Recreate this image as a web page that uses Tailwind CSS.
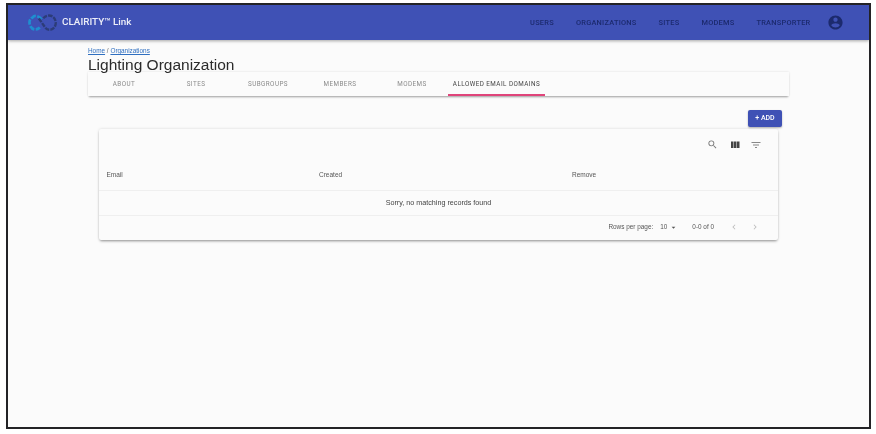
<!DOCTYPE html>
<html lang="en">
<head>
    <meta charset="UTF-8">
    <title>CLAIRITY Link</title>
    <script src="https://cdn.jsdelivr.net/npm/@tailwindcss/browser@4"></script>
</head>
<body class="bg-white font-['Liberation_Sans',Arial,sans-serif]">
    <div class="w-[876px] h-[434px] pt-[3px] pl-[6px] pr-[5px] pb-[5px] overflow-hidden">
        <div class="h-full border-2 border-[#232326] bg-[#fbfbfb] overflow-hidden">
            <div class="blur-[0.4px]">
            <!-- top bar -->
            <header class="h-[35px] bg-[#3f51b5] shadow-[0_1px_3px_rgba(0,0,0,0.35)] flex items-center pl-[20px] pr-[25.5px]">
                <svg class="w-[29px] h-[20px] mr-[5px]" viewBox="0 0 32 22" fill="none">
                    <path d="M15 7 C12 3 7 2 5 5 C1 6 1 12 3 15 C5 19 10 19 13 16" stroke="#1f8fd0" stroke-width="3" stroke-dasharray="6 1.5"/>
                    <path d="M12 6 L19 16 C22 20 28 19 30 14 C32 9 29 4 25 3 C21 2 18 4 16 7" stroke="#2c3c78" stroke-width="2.6" stroke-dasharray="5 1.2"/>
                </svg>
                <span class="font-['Roboto',sans-serif] text-white/90 text-[9.9px] font-medium">CLAIRITY™ Link</span>
                <nav class="ml-auto flex items-center font-['Roboto',sans-serif] text-[7.4px] tracking-[0.25px] text-[#1c2a6e] font-medium">
                    <span class="mr-[22px]">USERS</span>
                    <span class="mr-[22px]">ORGANIZATIONS</span>
                    <span class="mr-[22px]">SITES</span>
                    <span class="mr-[22px]">MODEMS</span>
                    <span class="mr-[16px]">TRANSPORTER</span>
                    <svg class="w-[17px] h-[17px]" viewBox="0 0 24 24" fill="#1c2a6e">
                        <path d="M12 2C6.48 2 2 6.48 2 12s4.48 10 10 10 10-4.48 10-10S17.52 2 12 2zm0 3c1.66 0 3 1.34 3 3s-1.34 3-3 3-3-1.34-3-3 1.34-3 3-3zm0 14.2c-2.5 0-4.71-1.28-6-3.22.03-1.99 4-3.08 6-3.08 1.99 0 5.97 1.09 6 3.08-1.29 1.94-3.5 3.22-6 3.22z"/>
                    </svg>
                </nav>
            </header>

            <main class="pt-[7px]">
                <div class="ml-[80px] mr-[80px]">
                    <div class="text-[6.4px] leading-[8px] text-[#2f6fc0]"><span class="underline">Home</span> <span class="text-[#666]">/</span> <span class="underline">Organizations</span></div>
                    <h1 class="relative z-10 text-[15.5px] leading-[17px] text-[#2b2b2b] mt-[1px]">Lighting Organization</h1>
                    <!-- tabs -->
                    <div class="h-[24px] -mt-[1px] bg-[#fbfbfb] shadow-[0_2px_2px_-1px_rgba(0,0,0,0.35),0_0_2px_rgba(0,0,0,0.12)] flex font-['Roboto',sans-serif] text-[6.3px] text-[#8a8a8a] tracking-[0.45px] whitespace-nowrap">
                        <span class="w-[72px] pt-[2px] flex items-center justify-center">ABOUT</span>
                        <span class="w-[72px] pt-[2px] flex items-center justify-center">SITES</span>
                        <span class="w-[72px] pt-[2px] flex items-center justify-center">SUBGROUPS</span>
                        <span class="w-[72px] pt-[2px] flex items-center justify-center">MEMBERS</span>
                        <span class="w-[72px] pt-[2px] flex items-center justify-center">MODEMS</span>
                        <span class="w-[97px] pt-[4px] flex items-center justify-center text-[#444] border-b-2 border-[#e0457b]">ALLOWED EMAIL DOMAINS</span>
                    </div>
                </div>

                <div class="flex justify-end mt-[14px] mr-[87px]">
                    <button class="w-[34px] h-[17px] bg-[#3f51b5] rounded-[2px] font-['Roboto',sans-serif] text-white text-[7px] font-medium shadow-[0_1px_2px_rgba(0,0,0,0.3)]">+ ADD</button>
                </div>

                <!-- table card -->
                <section class="ml-[91px] mr-[91px] mt-[2px] h-[111px] bg-[#fbfbfb] rounded-[2px] shadow-[0_2px_3px_-1px_rgba(0,0,0,0.4),0_0_3px_rgba(0,0,0,0.15)] flex flex-col text-[6.5px] text-[#555]">
                    <div class="h-[31px] flex items-center justify-end pr-[15.7px]">
                        <svg class="w-[11px] h-[11px]" viewBox="0 0 24 24" fill="#777"><path d="M15.5 14h-.79l-.28-.27A6.47 6.47 0 0016 9.5 6.5 6.5 0 109.5 16c1.61 0 3.09-.59 4.23-1.57l.27.28v.79l5 4.99L20.49 19l-4.99-5zm-6 0C7.01 14 5 11.99 5 9.5S7.01 5 9.5 5 14 7.01 14 9.5 11.99 14 9.5 14z"/></svg>
                        <svg class="w-[12px] h-[12px] ml-[10.8px]" viewBox="0 0 24 24" fill="#444"><path d="M10 18h5V5h-5v13zm-6 0h5V5H4v13zM16 5v13h5V5h-5z"/></svg>
                        <svg class="w-[12px] h-[12px] ml-[9.3px]" viewBox="0 0 24 24" fill="#888"><path d="M10 18h4v-2h-4v2zM3 6v2h18V6H3zm3 7h12v-2H6v2z"/></svg>
                    </div>
                    <div class="h-[31px] grid grid-cols-[212.5px_253px_1fr] items-center pl-[7.5px] border-b border-[#efefef]">
                        <span>Email</span>
                        <span>Created</span>
                        <span>Remove</span>
                    </div>
                    <div class="h-[25px] flex items-center justify-center border-b border-[#efefef] text-[#444] text-[7.2px]">Sorry, no matching records found</div>
                    <div class="flex-1 flex items-center justify-end text-[6.4px] pr-[18px] pb-[2px]">
                        <span>Rows per page:</span>
                        <span class="ml-[7px]">10</span>
                        <svg class="w-[9px] h-[9px] ml-[2px]" viewBox="0 0 24 24" fill="#555"><path d="M7 10l5 5 5-5z"/></svg>
                        <span class="ml-[14px]">0-0 of 0</span>
                        <svg class="w-[10px] h-[10px] ml-[15px]" viewBox="0 0 24 24" fill="#bbb"><path d="M15.41 7.41L14 6l-6 6 6 6 1.41-1.41L10.83 12z"/></svg>
                        <svg class="w-[10px] h-[10px] ml-[11px]" viewBox="0 0 24 24" fill="#bbb"><path d="M10 6L8.59 7.41 13.17 12l-4.58 4.59L10 18l6-6z"/></svg>
                    </div>
                </section>
            </main>
            </div>
        </div>
    </div>
</body>
</html>
